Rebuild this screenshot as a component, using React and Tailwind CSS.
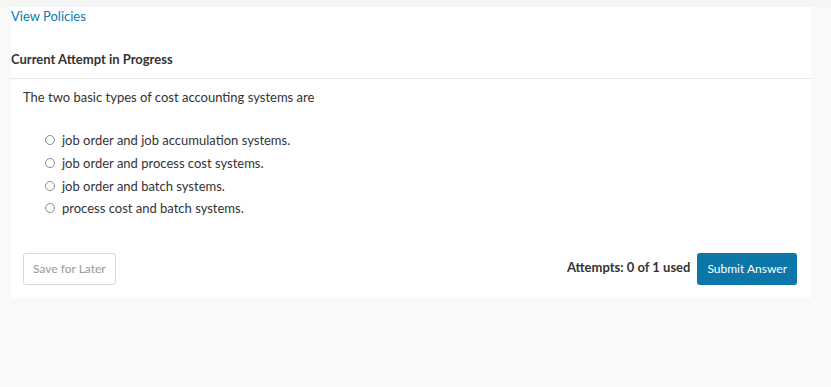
export default function App() {
  const options = [
    'job order and job accumulation systems.',
    'job order and process cost systems.',
    'job order and batch systems.',
    'process cost and batch systems.',
  ];

  return (
    <div className="min-h-[387px] w-full bg-[#f9f9f9] font-['Lato','Liberation_Sans',sans-serif] text-[13px] text-[#333]">
      <div className="h-[7px] bg-[#f5f5f5]" />
      <div className="ml-[11px] w-[800px] bg-white pb-[13px]">
        {/* Header */}
        <div className="leading-[18px]">
          <a href="#" className="text-[#0a7ab3]">View Policies</a>
        </div>
        <div className="mt-[25px] border-b border-[#e6e6e6] pb-[10px] font-bold leading-[18px]">
          Current Attempt in Progress
        </div>

        {/* Question */}
        <div className="px-[12px] pt-[8px]">
          <p className="leading-[20px]">The two basic types of cost accounting systems are</p>
          <div className="mt-[22px] flex flex-col pl-[22px]">
            {options.map((o) => (
              <label key={o} className="flex h-[22.7px] items-center gap-[7px]">
                <span className="h-[10px] w-[10px] rounded-full border border-[#8a8a8a] bg-white" />
                <span className="leading-[18px]">{o}</span>
              </label>
            ))}
          </div>

          {/* Footer */}
          <div className="mt-[33px] flex items-center justify-between pr-[2px]">
            <button className="h-[32px] rounded-[3px] border border-[#d9d9d9] bg-white px-[9px] text-[12px] text-[#999]">
              Save for Later
            </button>
            <div className="flex items-center gap-[7px]">
              <span className="mb-[2px] font-bold">Attempts: 0 of 1 used</span>
              <button className="h-[32px] rounded-[3px] bg-[#0a77a8] px-[10px] text-[12px] text-white">
                Submit Answer
              </button>
            </div>
          </div>
        </div>
      </div>
    </div>
  );
}
